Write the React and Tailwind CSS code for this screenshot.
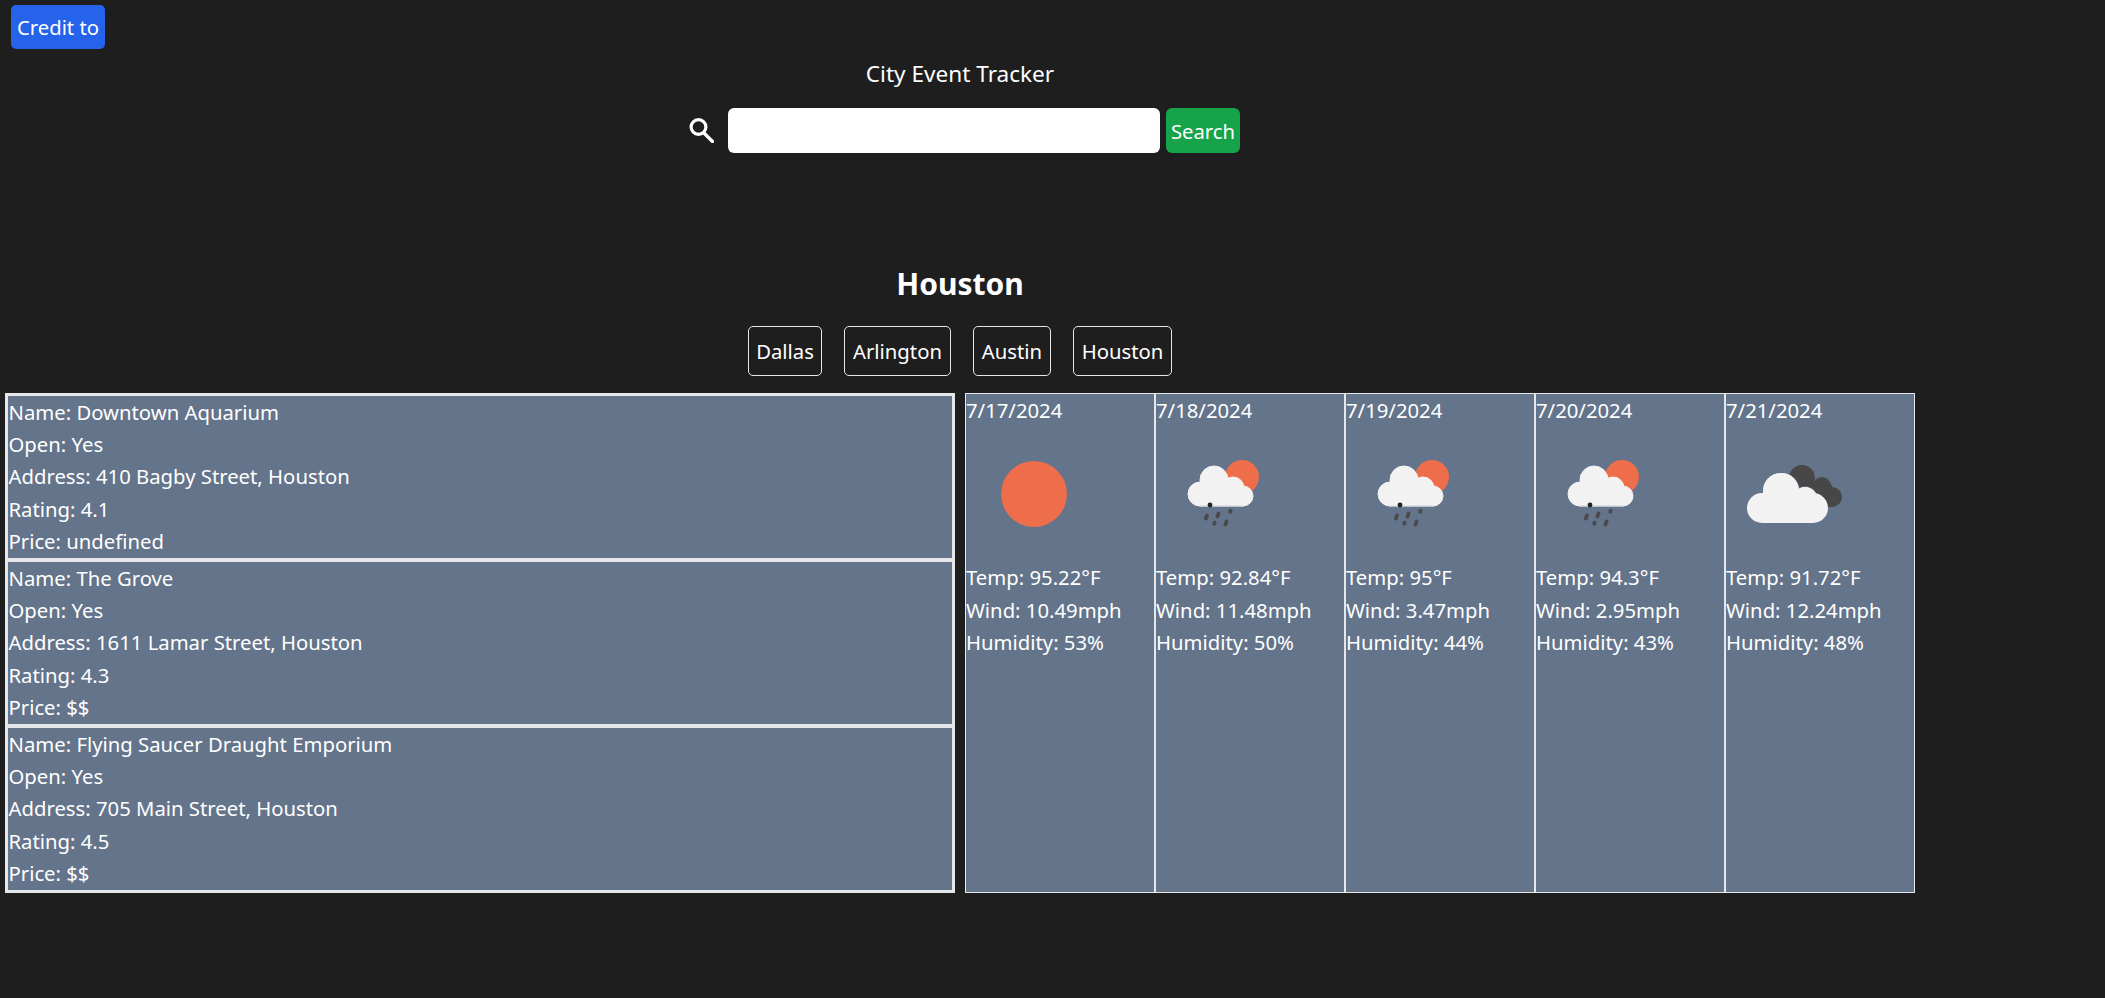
const FONT = "font-['Noto_Sans','Open_Sans',sans-serif]";

const places = [
  ["Downtown Aquarium", "410 Bagby Street, Houston", "4.1", "undefined"],
  ["The Grove", "1611 Lamar Street, Houston", "4.3", "$$"],
  ["Flying Saucer Draught Emporium", "705 Main Street, Houston", "4.5", "$$"],
];

const days = [
  ["7/17/2024", "sun", "95.22", "10.49", "53"],
  ["7/18/2024", "rain", "92.84", "11.48", "50"],
  ["7/19/2024", "rain", "95", "3.47", "44"],
  ["7/20/2024", "rain", "94.3", "2.95", "43"],
  ["7/21/2024", "clouds", "91.72", "12.24", "48"],
];

const cities = [
  ["Dallas", "w-[74px]"],
  ["Arlington", "w-[107px]"],
  ["Austin", "w-[78px]"],
  ["Houston", "w-[99px]"],
];

function WeatherIcon({ kind }) {
  return (
    <svg width="133" height="133" viewBox="0 0 133 133" className="mt-px ml-px block">
      {kind === "sun" && <circle cx="67" cy="67" r="33" fill="#ee6e4b" />}
      {kind === "rain" && (
        <g>
          <circle cx="85" cy="50" r="17" fill="#ee6e4b" />
          <g fill="#f2f2f2" stroke="#f2f2f2">
            <circle cx="57" cy="53" r="14" />
            <circle cx="76" cy="61" r="11" />
            <circle cx="43" cy="67" r="12" />
            <circle cx="86" cy="69" r="10" />
            <rect x="43" y="60" width="43" height="19" />
          </g>
          <path d="M43 79H86" stroke="#cfd3d8" strokeWidth="1" />
          <circle cx="53" cy="78" r="2.4" fill="#222" />
          <g stroke="#4a4a4a" strokeWidth="3.8" strokeLinecap="round">
            <path d="M50 88.5L48.8 91.5" />
            <path d="M61.6 86.5L60.4 89.5" />
            <path d="M73.6 83.7L73.2 84.7" />
            <path d="M57.6 95.7L57.2 96.7" />
            <path d="M69.6 94.5L68.4 97.5" />
          </g>
        </g>
      )}
      {kind === "clouds" && (
        <g>
          <g fill="#474747">
            <circle cx="75" cy="51" r="13" />
            <circle cx="95" cy="59" r="9" />
            <circle cx="105" cy="70" r="10" />
            <rect x="68" y="58" width="37" height="22" />
          </g>
          <g fill="#f2f2f2" stroke="#5f6f85" strokeWidth="1.5" paintOrder="stroke">
            <circle cx="54" cy="64" r="18" />
            <circle cx="78" cy="72" r="12" />
          </g>
          <g fill="#f2f2f2">
            <circle cx="35" cy="81" r="15" />
            <circle cx="86" cy="81" r="15" />
            <rect x="35" y="66" width="51" height="30" />
            <circle cx="54" cy="64" r="18" />
            <circle cx="78" cy="72" r="12" />
          </g>
        </g>
      )}
    </svg>
  );
}

export default function App() {
  return (
    <div className={`min-h-screen bg-[#1e1e1e] text-white text-[20.3px] leading-[32px] ${FONT}`}>
      <div className="w-[1920px] flex flex-col items-center">
        <button className="self-start ml-[11px] mt-[5px] h-[44px] w-[94px] rounded-[5px] bg-[#2563eb] text-white">
          Credit to
        </button>
        <h1 className="mt-[9px] h-[32px] text-[22.6px]">City Event Tracker</h1>
        <div className="mt-[18px] ml-[9px] flex items-center">
          <svg width="25" height="25" viewBox="0 0 25 25" fill="none" stroke="white" strokeWidth="3.2" className="mr-[14px] mb-[1px]">
            <circle cx="9.5" cy="9" r="7.4" />
            <path d="M15 15L23.5 23.5" strokeLinecap="round" />
          </svg>
          <input className="h-[45px] w-[432px] rounded-[6px] bg-white text-black outline-none" />
          <button className="ml-[6px] h-[45px] w-[74px] rounded-[6px] bg-[#16a34a] text-white">Search</button>
        </div>
        <h2 className="mt-[109px] h-[45px] text-[30px] leading-[43px] font-bold">Houston</h2>
        <div className="mt-[19px] flex gap-[22px]">
          {cities.map(([c, w]) => (
            <button key={c} className={`h-[50px] ${w} rounded-[5px] border border-[#e5e7eb] text-white`}>
              {c}
            </button>
          ))}
        </div>
        <div className="mt-[17px] flex w-full px-[5px] gap-[10px]">
          <div className="flex h-[500px] w-[950px] flex-col">
            {places.map((p) => (
              <div
                key={p[0]}
                className="flex-1 border-x-[3px] border-y-2 first:border-t-[3px] last:border-b-[3px] border-[#e5e7eb] bg-[#64748b] pl-[0.5px] leading-[32.2px]"
              >
                <div>Name: {p[0]}</div>
                <div>Open: Yes</div>
                <div>Address: {p[1]}</div>
                <div>Rating: {p[2]}</div>
                <div>Price: {p[3]}</div>
              </div>
            ))}
          </div>
          <div className="flex h-[500px] w-[950px]">
            {days.map((d) => (
              <div key={d[0]} className="w-[190px] border border-[#e5e7eb] bg-[#64748b] leading-[32.4px]">
                <div>{d[0]}</div>
                <WeatherIcon kind={d[1]} />
                <div className="mt-[1px]">Temp: {d[2]}°F</div>
                <div>Wind: {d[3]}mph</div>
                <div>Humidity: {d[4]}%</div>
              </div>
            ))}
          </div>
        </div>
      </div>
    </div>
  );
}
